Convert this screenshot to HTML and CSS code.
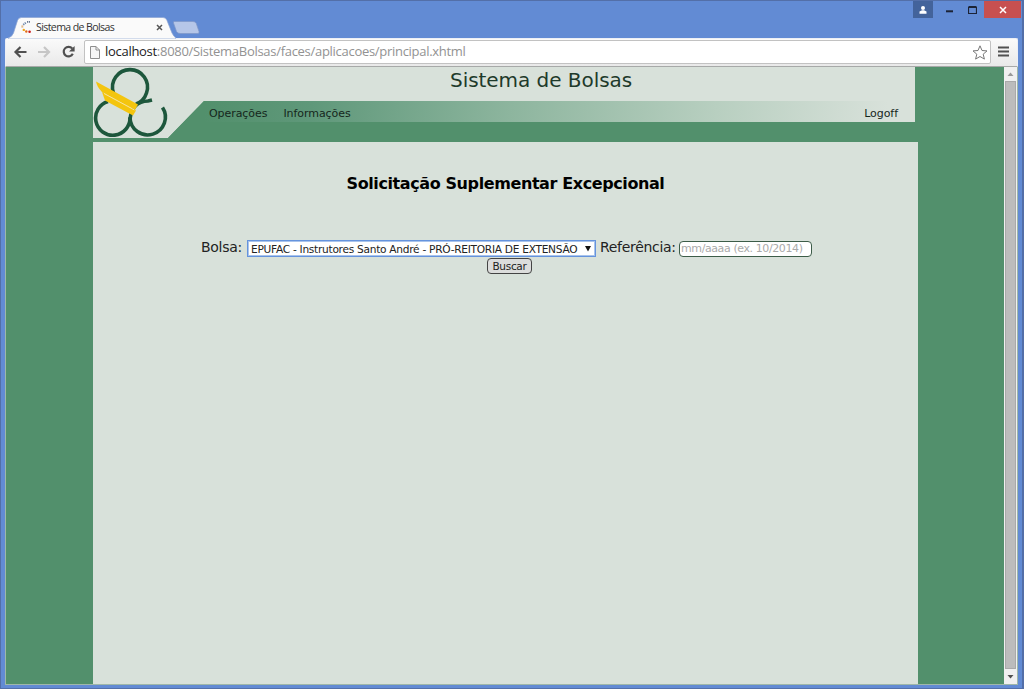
FILE: index.html
```html
<!DOCTYPE html>
<html lang="pt-BR">
<head>
<meta charset="utf-8">
<title>Sistema de Bolsas</title>
<link rel="stylesheet" href="styles.css">
</head>
<body>
<div class="window">
  <div class="titlebar">
    <div class="tab">
      <svg class="tab-shape" width="168" height="22" viewBox="0 0 168 22"><path d="M0 22V21Q4 20 5.500 16L9.500 3.500Q10.500.5 13.500.5H155Q158 .5 159 3.500L164 16Q166 20 168 21V22Z" fill="#fafafa" stroke="#8ba4d2" stroke-width=".7"/></svg>
      <svg class="favicon" width="12" height="12" viewBox="0 0 12 12"><g fill="none" stroke-width="1.900"><path d="M9 .9H6" stroke="#6a7890" stroke-dasharray="1.300 .7"/><path d="M4.800 1.800L2 4" stroke="#6f86a8" stroke-dasharray="1.300 .7"/><path d="M1.300 4.500v2.600" stroke="#d9a56c" stroke-dasharray="1.200 .8"/></g><circle cx="2.800" cy="8.900" r="1.200" fill="#efa61c"/><circle cx="5.300" cy="10.500" r="1.200" fill="#e36b19"/><circle cx="8.600" cy="10.700" r="1.300" fill="#ca1717"/></svg>
      <span class="tab-title">Sistema de Bolsas</span>
      <svg class="tab-close" width="7" height="7" viewBox="0 0 7 7"><path d="M1 1l5 5M6 1L1 6" stroke="#555" stroke-width="1.500"/></svg>
    </div>
    <svg class="new-tab" width="27" height="13" viewBox="0 0 27 13"><path d="M1 .5H20Q22.500.5 23.300 2.500L26 10.500Q26.500 12.500 25 12.500H7Q4.500 12.500 3.500 10.500L.5 2Q.2.500 1 .5Z" fill="#b5c6e8" stroke="#7e97c7" stroke-width=".7"/></svg>
    <div class="controls">
      <span class="user"><svg width="8" height="8" viewBox="0 0 8 8"><circle cx="4" cy="2.100" r="2" fill="#fff"/><path d="M.5 7.800V5.600L3 4.300h2l2.500 1.300v2.200Z" fill="#fff"/></svg></span>
      <svg class="min" width="8" height="3"><path d="M0 1.300h7" stroke="#1c2336" stroke-width="2"/></svg>
      <svg class="max" width="9" height="8"><path d="M.5 1.500h8v6h-8zM.5.500h8" fill="none" stroke="#1c2336" stroke-width="1.200"/></svg>
      <span class="close"><svg width="8" height="8"><path d="M1 1l6 6M7 1L1 7" stroke="#fff" stroke-width="1.500"/></svg></span>
    </div>
  </div>
  <div class="toolbar">
    <svg class="nav" width="72" height="16" viewBox="0 0 72 16">
      <path d="M14.500 8H3.500M8.500 3L3.500 8l5 5" fill="none" stroke="#505050" stroke-width="2.200"/>
      <path d="M26 8H37M32 3L37 8l-5 5" fill="none" stroke="#c6c6c6" stroke-width="2.200"/>
      <path d="M60.200 4.500A4.800 4.800 0 1 0 60.800 9.800" fill="none" stroke="#505050" stroke-width="2.200"/><path d="M62.600 2v5.500H57Z" fill="#505050"/>
    </svg>
    <div class="address">
      <svg width="10" height="13" viewBox="0 0 10 13"><path d="M.5.500H6L9.500 4v8.500H.5ZM6 .5V4h3.500" fill="#f5f5f5" stroke="#8e8e8e"/></svg>
      <span class="url"><b>localhost</b>:8080/SistemaBolsas/faces/aplicacoes/principal.xhtml</span>
      <svg class="star" width="16" height="15" viewBox="0 0 16 15"><path d="M8 .8l2 4.700 5 .4-3.800 3.300 1.200 4.900L8 11.500l-4.400 2.600 1.200-4.900L1 5.900l5-.4Z" fill="#fff" stroke="#777"/></svg>
    </div>
    <svg class="menu" width="11" height="11"><path d="M0 1.500h11M0 5.500h11M0 9.500h11" stroke="#515151" stroke-width="2.200"/></svg>
  </div>
  <div class="viewport">
    <div class="page">
      <header class="header">
        <svg class="logo" width="112" height="75" viewBox="0 0 112 75">
          <path d="M0 0H112V34H111L75 71H0Z" fill="#d8e1da"/>
          <path d="M112 34H111L75 71V75H112Z" fill="#52906c"/>
          <g fill="none" stroke="#1d573c" stroke-width="3.600">
            <path d="M20.500 26A17.500 17.500 0 1 1 53.500 26Q51 34 43 37"/>
            <path d="M15 34.500A17.200 17.200 0 1 0 37 50.500"/>
            <path d="M37 50.500A17.700 17.700 0 1 0 69.500 40.500"/>
            <path d="M37 52Q39 34.500 55 34L59 33"/>
          </g>
          <path d="M3 14.500L45 37.500L42 43L9 25Q4 20 3 14.500Z" fill="#f4c50e"/>
          <path d="M9 25L43 43.500L40 48.500L12 33.500Z" fill="#f4c50e"/>
          <path d="M11 26.500L41.500 43" stroke="#f8e49a" stroke-width="1"/>
        </svg>
        <div class="head-main">
          <h1>Sistema de Bolsas</h1>
          <nav><a>Operações</a><a>Informações</a><a class="logoff">Logoff</a></nav>
        </div>
      </header>
      <main>
        <h2>Solicitação Suplementar Excepcional</h2>
        <form>
          <div class="fields">
            <label class="bolsa">Bolsa:</label>
            <div class="select"><span>EPUFAC - Instrutores Santo André - PRÓ-REITORIA DE EXTENSÃO</span><svg width="6" height="6"><path d="M0 0h6L3 5.500Z" fill="#111"/></svg></div>
            <label class="ref">Referência:</label>
            <input type="text" placeholder="mm/aaaa (ex. 10/2014)">
          </div>
          <button type="button">Buscar</button>
        </form>
      </main>
    </div>
    <div class="scrollbar">
      <svg width="13" height="14"><path d="M3.500 9L6.500 5.500l3 3.500Z" fill="#999"/></svg>
      <div class="thumb"></div>
      <svg width="13" height="15"><path d="M3.500 6h6L6.500 9.500Z" fill="#505050"/></svg>
    </div>
  </div>
</div>
</body>
</html>
```
FILE: styles.css
```css
* { box-sizing: border-box; }
body { margin: 0; overflow: hidden; font-family: "DejaVu Sans", sans-serif; }
svg { display: block; flex: none; }
.window { width: 1024px; height: 689px; background: #628bd4; border: 1px solid #536fa8; border-right-width: 2px; display: flex; flex-direction: column; padding: 0 4px 3px; }
.titlebar { height: 37px; display: flex; align-items: flex-start; flex: none; padding-left: 3px; }
.tab { width: 168px; height: 22px; margin-top: 16px; display: flex; align-items: center; position: relative; padding: 0 13px 2px 13px; }
.tab-shape { position: absolute; left: 0; top: 0; }
.favicon, .tab-title, .tab-close { position: relative; }
.tab-title { font: 10.600px "Open Sans", sans-serif; letter-spacing: -0.620px; color: #333; margin-left: 3px; white-space: nowrap; }
.tab-close { margin-left: auto; }
.new-tab { margin: 20px 0 0 -3px; }
.controls { margin-left: auto; display: flex; align-items: flex-start; margin-right: -3px; }
.user { width: 20px; height: 17px; background: #43639b; display: grid; place-items: center; margin-right: -1px; }
.min { margin: 9px 0 0 14px; }
.max { margin: 5px 0 0 14px; }
.close { width: 37px; height: 17px; background: #c75050; margin-left: 7px; display: grid; place-items: center; }
.toolbar { height: 29px; flex: none; background: linear-gradient(#fafafa, #e9e9e9); border: 1px solid #eceff5; border-bottom: 1px solid #a7a9a8; border-radius: 2px 2px 0 0; display: flex; align-items: flex-start; padding: 1px 8px 0 6px; }
.nav { margin: 4px 0 0; }
.address { flex: 1; height: 24px; background: #fff; border: 1px solid #c2c2c2; border-radius: 2px; display: flex; align-items: center; padding: 0 3px 0 5px; }
.url { font: 13px/18px "Open Sans", sans-serif; letter-spacing: -0.290px; color: #929292; margin: 0 0 2px 5px; white-space: nowrap; }
.url b { font-weight: 400; color: #222; }
.star { margin: 0 -1px 0 auto; }
.menu { margin: 6px 0 0 7px; }
.viewport { flex: 1; min-height: 0; display: flex; border: 1px solid #9fb7a9; border-top: 0; }
.page { flex: 1; background: #52906c; padding-left: 87px; display: flex; flex-direction: column; }
.header { width: 822px; height: 75px; display: flex; flex: none; }
.head-main { flex: 1; height: 55px; background: #d8e1da; }
h1 { font-size: 20px; font-weight: 400; line-height: 26px; letter-spacing: -0.040px; margin: 0; height: 34px; padding-left: 245px; color: #1e3a2b; white-space: nowrap; }
nav { height: 21px; background: linear-gradient(95deg, #52906c 0%, #5f987a 15%, #8db59e 43%, #b8cfc0 72%, #d8e1da 96%); display: flex; padding: 4px 17px 0 4px; font-size: 11px; line-height: 17px; color: #15271c; }
nav a { letter-spacing: -0.060px; }
nav a + a { margin-left: 16px; }
nav a.logoff { margin-left: auto; }
main { width: 825px; flex: 1; background: #d8e1da; padding-top: 32px; }
h2 { margin: 0; font-size: 16px; line-height: 20px; letter-spacing: -0.400px; text-align: center; color: #000; }
form { margin-top: 46px; }
.fields { display: flex; align-items: center; height: 17px; padding-left: 108px; font-size: 14px; color: #222; white-space: nowrap; }
.fields label { flex: none; line-height: 17px; padding-bottom: 2px; letter-spacing: -0.300px; }
.bolsa { width: 42px; }
.select { flex: none; width: 349px; height: 17px; margin-left: 4px; border: 1px solid #6593dd; outline: 1px solid #a9c4ec; outline-offset: -2px; background: #fff; display: flex; align-items: center; justify-content: space-between; padding: 0 4px 0 3px; font-size: 10.600px; letter-spacing: -0.270px; color: #222; }
.ref { width: 76px; margin-left: 4px; }
input { width: 133px; height: 16px; margin: 0 0 0 3px; border: 1px solid #3c5c48; border-radius: 4px; padding: 0 1px; font: 11px "DejaVu Sans", sans-serif; letter-spacing: -0.400px; background: #fff; }
input::placeholder { color: #aaa; opacity: 1; }
button { display: block; width: 45px; height: 16px; margin: 1px 0 0 394px; padding: 0; border: 1px solid #444; border-radius: 4px; background: #dcdddc; color: #222; font: 10.500px/14px "DejaVu Sans", sans-serif; letter-spacing: -0.300px; }
.scrollbar { width: 13px; background: #f0f0f0; display: flex; flex-direction: column; }
.thumb { flex: 1; margin: 0 1px; background: #bcbcbc; border: 1px solid #a9a9a9; }
```
